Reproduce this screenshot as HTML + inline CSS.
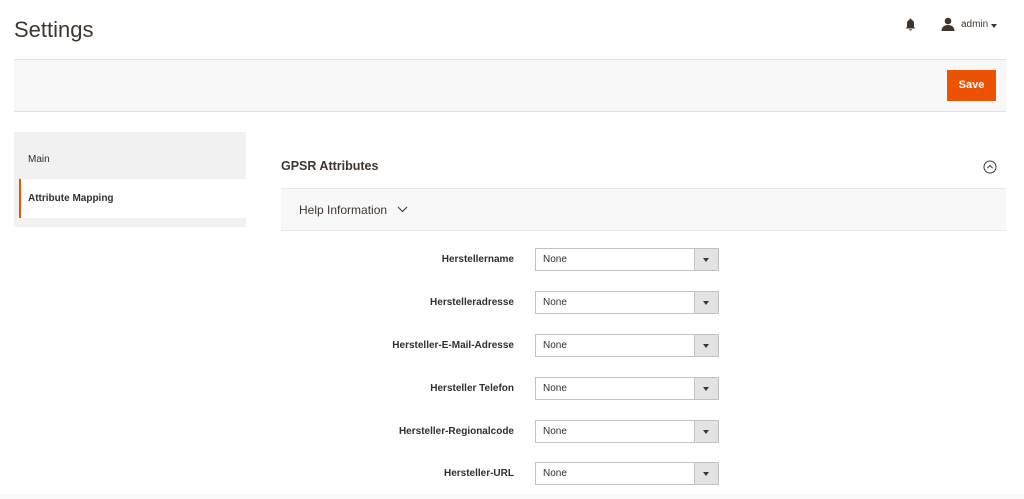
<!DOCTYPE html>
<html><head><style>
body{margin:0;width:1024px;height:499px;background:#fff;font-family:"Liberation Sans",sans-serif;color:#303030;position:relative;overflow:hidden}
.a{position:absolute}
.sel{position:absolute;left:535px;width:184px;height:23px;border:1px solid #c2c2c2;box-sizing:border-box;background:#fff;font-size:10px;line-height:22px;padding-left:7px;color:#303030}
.sel:after{content:"";position:absolute;right:0;top:0;width:23px;height:21px;background:#e3e3e3;border-left:1px solid #c2c2c2}
.sel i{position:absolute;right:9px;top:9px;width:0;height:0;border-left:3px solid transparent;border-right:3px solid transparent;border-top:4px solid #41362f;z-index:2}
.lbl{position:absolute;right:510px;font-size:10px;font-weight:bold;color:#303030;text-align:right}
</style></head><body>
<div class="a" style="left:14px;top:17px;font-size:22px;color:#41362f">Settings</div>
<svg class="a" style="left:905px;top:18px" width="11" height="13" viewBox="0 0 11 13"><path d="M5.5 0.5c-0.6 0-1 0.4-1 1v0.3C3 2.3 2 3.6 2 5.2V9L0.8 10.5h9.4L9 9V5.2C9 3.6 8 2.3 6.5 1.8V1.5c0-0.6-0.4-1-1-1zM4.2 11.2a1.3 1.3 0 0 0 2.6 0z" fill="#41362f"/></svg>
<svg class="a" style="left:941px;top:17px" width="14" height="14" viewBox="0 0 14 14"><circle cx="7" cy="4" r="3.3" fill="#41362f"/><path d="M0.5 14c0-4 2.8-6 6.5-6s6.5 2 6.5 6z" fill="#41362f"/></svg>
<div class="a" style="left:961px;top:19px;font-size:10px;color:#41362f">admin</div>
<div class="a" style="left:991px;top:24px;border-left:3px solid transparent;border-right:3px solid transparent;border-top:4px solid #41362f"></div>
<div class="a" style="left:14px;top:59px;width:992px;height:51px;background:#f8f8f8;border-top:1px solid #e3e3e3;border-bottom:1px solid #e3e3e3"></div>
<div class="a" style="left:947px;top:70px;width:49px;height:31px;background:#eb5202;color:#fff;font-size:11px;font-weight:bold;text-align:center;line-height:31px">Save</div>
<div class="a" style="left:14px;top:132px;width:232px;height:95px;background:#f1f1f1"></div>
<div class="a" style="left:28px;top:154px;font-size:10px;color:#303030">Main</div>
<div class="a" style="left:19px;top:179px;width:227px;height:39px;background:#fff;border-left:2px solid #eb5202;box-sizing:border-box"></div>
<div class="a" style="left:28px;top:193px;font-size:10px;font-weight:bold;color:#303030">Attribute Mapping</div>
<div class="a" style="left:281px;top:159px;font-size:12.5px;font-weight:bold;color:#41362f">GPSR Attributes</div>
<svg class="a" style="left:983px;top:160px" width="14" height="14" viewBox="0 0 14 14"><circle cx="7" cy="7" r="6" fill="none" stroke="#41362f" stroke-width="1"/><path d="M4.3 8.2L7 5.5l2.7 2.7" fill="none" stroke="#41362f" stroke-width="1"/></svg>
<div class="a" style="left:281px;top:188px;width:725px;height:41px;background:#f8f8f8;border-top:1px solid #e8e8e8;border-bottom:1px solid #e8e8e8"></div>
<div class="a" style="left:299px;top:203px;font-size:12px;color:#41362f">Help Information</div>
<svg class="a" style="left:397px;top:206px" width="11" height="7" viewBox="0 0 11 7"><path d="M1 1l4.5 4.5L10 1" fill="none" stroke="#41362f" stroke-width="1.1"/></svg>
<div class="lbl" style="top:254px">Herstellername</div><div class="sel" style="top:248px">None<i></i></div>
<div class="lbl" style="top:297px">Herstelleradresse</div><div class="sel" style="top:291px">None<i></i></div>
<div class="lbl" style="top:340px">Hersteller-E-Mail-Adresse</div><div class="sel" style="top:334px">None<i></i></div>
<div class="lbl" style="top:383px">Hersteller Telefon</div><div class="sel" style="top:377px">None<i></i></div>
<div class="lbl" style="top:426px">Hersteller-Regionalcode</div><div class="sel" style="top:420px">None<i></i></div>
<div class="lbl" style="top:468px">Hersteller-URL</div><div class="sel" style="top:462px">None<i></i></div>
<div class="a" style="left:0;top:494px;width:1024px;height:5px;background:#fafafa"></div>
</body></html>
